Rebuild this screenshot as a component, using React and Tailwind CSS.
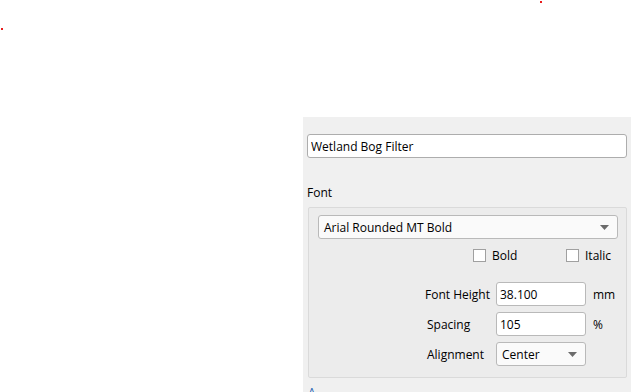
import { useState } from 'react';

function Checkbox({ label, checked, onChange }) {
    return (
        <label className="flex items-center gap-[6px] cursor-pointer">
            <span
                onClick={onChange}
                className="w-[13px] h-[13px] bg-white border border-[#a0a0a0] flex items-center justify-center"
            >
                {checked ? <span className="text-[10px] leading-none">✓</span> : null}
            </span>
            <span className="pt-[2px]">{label}</span>
        </label>
    );
}

function Combo({ value, className }) {
    return (
        <div
            className={`h-[24px] bg-[#fafafa] border border-[#b9b9b9] rounded-[3px] flex items-center justify-between pl-[5px] pr-[8px] ${className}`}
        >
            <span className="pt-[1px]">{value}</span>
            <svg width="9" height="5" viewBox="0 0 9 5">
                <path d="M0 0 L9 0 L4.5 5 Z" fill="#6b6b6b" />
            </svg>
        </div>
    );
}

export default function App() {
    const [bold, setBold] = useState(false);
    const [italic, setItalic] = useState(false);

    return (
        <div
            className="relative w-[631px] h-[392px] bg-white overflow-hidden text-[12px] text-black"
            style={{ fontFamily: '"Open Sans", "Noto Sans", sans-serif' }}
        >
            {/* canvas points */}
            <div className="absolute left-[1px] top-[28px] w-[2px] h-[2px] bg-[#e81c1c]" />
            <div className="absolute left-[540px] top-[1px] w-[2px] h-[2px] bg-[#e81c1c]" />

            <div className="ml-[303px] pt-[117px] h-full">
                <div className="bg-[#f0f0f0] h-full pl-[4px] pr-[4px] pt-[17px]">
                    <input
                        type="text"
                        defaultValue="Wetland Bog Filter"
                        className="w-[320px] h-[24px] bg-white border border-[#adadad] rounded-[3px] px-[3px] pt-[1px] outline-none"
                    />

                    <div className="mt-[27px] leading-[16px]">Font</div>

                    <div className="mt-[6px] ml-[1px] w-[319px] h-[171px] bg-[#ececec] border border-[#dadada] rounded-[2px] pt-[7px]">
                        <Combo value="Arial Rounded MT Bold" className="ml-[9px] w-[300px]" />

                        <div className="flex items-center mt-[9px] ml-[164px] h-[14px]">
                            <div className="w-[93px]">
                                <Checkbox label="Bold" checked={bold} onChange={() => setBold(!bold)} />
                            </div>
                            <Checkbox label="Italic" checked={italic} onChange={() => setItalic(!italic)} />
                        </div>

                        <div className="grid grid-cols-[181px_90px_auto] gap-x-[6px] gap-y-[6px] items-center mt-[20px]">
                            <div className="text-right pt-[2px]">Font Height</div>
                            <input
                                type="text"
                                defaultValue="38.100"
                                className="h-[24px] bg-white border border-[#b9b9b9] rounded-[3px] px-[3px] pt-[1px] outline-none"
                            />
                            <div className="pl-[1px] pt-[2px]">mm</div>

                            <div className="pl-[118px] pt-[2px]">Spacing</div>
                            <input
                                type="text"
                                defaultValue="105"
                                className="h-[24px] bg-white border border-[#b9b9b9] rounded-[3px] px-[3px] pt-[1px] outline-none"
                            />
                            <div className="pl-[1px] pt-[2px]">%</div>

                            <div className="pl-[118px] pt-[2px]">Alignment</div>
                            <Combo value="Center" className="w-[90px]" />
                            <div />
                        </div>
                    </div>

                    <div className="mt-[6px] ml-[1px] text-[#1a5fb4]">A</div>
                </div>
            </div>
        </div>
    );
}
